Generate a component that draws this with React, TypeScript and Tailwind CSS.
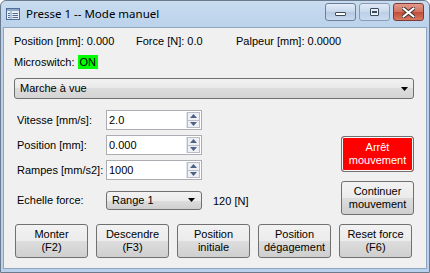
import React from "react";

const btnBg =
  "bg-[linear-gradient(#f2f2f2_0%,#ebebeb_50%,#dddddd_50%,#cfcfcf_100%)] border border-[#707070] rounded-[3px]";

const WinIcon = () => (
  <svg width="14" height="12" viewBox="0 0 14 12">
    <rect x="0.5" y="0.5" width="13" height="11" fill="#e8eef6" stroke="#4f6b93" />
    <rect x="1" y="1" width="12" height="2" fill="#8fa8c8" />
    <line x1="5" y1="3" x2="5" y2="11" stroke="#7f96b6" />
    <line x1="2" y1="5.5" x2="4" y2="5.5" stroke="#4f6b93" />
    <line x1="2" y1="7.5" x2="4" y2="7.5" stroke="#4f6b93" />
    <line x1="2" y1="9.5" x2="4" y2="9.5" stroke="#4f6b93" />
    <line x1="6.5" y1="5.5" x2="12" y2="5.5" stroke="#4f6b93" />
    <line x1="6.5" y1="7.5" x2="12" y2="7.5" stroke="#4f6b93" />
    <line x1="6.5" y1="9.5" x2="12" y2="9.5" stroke="#4f6b93" />
  </svg>
);

const Spin = () => (
  <div className="flex flex-col w-[14px] h-full border-l border-[#e2e3ea]">
    <div className="flex-1 flex items-center justify-center bg-[#eef0f4] border border-[#b8bdc8]">
      <svg width="7" height="4" viewBox="0 0 7 4">
        <path d="M3.5 0 L7 4 L0 4 Z" fill="#4d6185" />
      </svg>
    </div>
    <div className="flex-1 flex items-center justify-center bg-[#eef0f4] border border-t-0 border-[#b8bdc8]">
      <svg width="7" height="4" viewBox="0 0 7 4">
        <path d="M0 0 L7 0 L3.5 4 Z" fill="#4d6185" />
      </svg>
    </div>
  </div>
);

const Field = ({ label, value }: { label: string; value: string }) => (
  <div className="flex items-center h-[20px]">
    <span className="w-[92px] pl-[3px]">{label}</span>
    <div className="w-[96px] h-[20px] flex border border-[#abadb3] bg-white p-[1px]">
      <span className="flex-1 pl-[1px] leading-[16px]">{value}</span>
      <Spin />
    </div>
  </div>
);

const Btn = ({ a, b }: { a: string; b: string }) => (
  <div className={`w-[73px] h-[34px] flex flex-col items-center justify-center leading-[13px] ${btnBg}`}>
    <span>{a}</span>
    <span>{b}</span>
  </div>
);

const Arrow = () => (
  <svg width="7" height="4" viewBox="0 0 7 4">
    <path d="M0 0 L7 0 L3.5 4 Z" fill="#000" />
  </svg>
);

export default function App() {
  return (
    <div className="w-[430px] h-[273px] flex flex-col bg-[linear-gradient(#c8dbef,#b9d1ea_30px,#b9d1ea)] border border-[#6b7a8c] rounded-t-[6px] font-['Liberation_Sans',Arial,sans-serif] text-[11px] text-black overflow-hidden">
      {/* title bar */}
      <div className="h-[26px] flex items-start shrink-0">
        <div className="mt-[7px] ml-[5px]">
          <WinIcon />
        </div>
        <span className="ml-[6px] mt-[5px] font-['Noto_Sans',sans-serif] text-[11.5px] leading-[16px]">
          Presse 1 -- Mode manuel
        </span>
        <div className="ml-auto mr-[5px] flex gap-[3px] mt-[2px]">
          <div className="w-[31px] h-[18px] rounded-[3px] border border-[#6d809b] bg-[linear-gradient(#e4edf7,#c6d6ea_50%,#b4c8e0_50%,#c9daee)] flex items-center justify-center">
            <div className="w-[11px] h-[4px] mt-[4px] bg-white border border-[#3c4a5e] rounded-[1px]" />
          </div>
          <div className="w-[31px] h-[18px] rounded-[3px] border border-[#8a9cb5] bg-[linear-gradient(#e0eaf5,#c8d8eb_50%,#bccfe6_50%,#cadbee)] flex items-center justify-center">
            <div className="w-[9px] h-[8px] border border-[#3c4a5e] bg-[#e8eef6] rounded-[1px] flex items-center justify-center">
              <div className="w-[5px] h-[2px] border border-[#3c4a5e]" />
            </div>
          </div>
          <div className="w-[31px] h-[18px] rounded-[3px] border border-[#7a3a36] bg-[linear-gradient(#e49a8c,#d0705f_50%,#c04a37_50%,#d77a60)] flex items-center justify-center">
            <svg width="13" height="11" viewBox="0 0 13 11">
              <path
                d="M1.5 1.5 L11.5 9.5 M11.5 1.5 L1.5 9.5"
                stroke="#40302e"
                strokeWidth="4"
                strokeLinecap="round"
              />
              <path
                d="M1.5 1.5 L11.5 9.5 M11.5 1.5 L1.5 9.5"
                stroke="#fff"
                strokeWidth="2.2"
                strokeLinecap="round"
              />
            </svg>
          </div>
        </div>
      </div>

      {/* client area */}
      <div className="flex-1 mx-[2px] mb-[3px] bg-[#f0f0f0] border border-[#8ea5bf] flex flex-col pl-[10px] pr-[12px]">
        <div className="flex mt-[6px] h-[14px] items-center">
          <span className="w-[122px]">Position [mm]: 0.000</span>
          <span className="w-[100px]">Force [N]: 0.0</span>
          <span>Palpeur [mm]: 0.0000</span>
        </div>
        <div className="flex mt-[7px] h-[14px] items-center">
          <span>Microswitch:</span>
          <span className="ml-[3px] bg-[#00ff00] px-[2px] leading-[14px]">ON</span>
        </div>

        <div className="mt-[9px] h-[21px] flex items-center pl-[5px] pr-[5px] border border-[#707070] rounded-[3px] bg-[linear-gradient(#f2f2f2,#e8e8e8_50%,#dcdcdc_50%,#d4d4d4)]">
          <span>Marche à vue</span>
          <span className="ml-auto">
            <Arrow />
          </span>
        </div>

        <div className="flex mt-[11px]">
          <div className="flex flex-col gap-[5px]">
            <Field label="Vitesse [mm/s]:" value="2.0" />
            <Field label="Position [mm]:" value="0.000" />
            <Field label="Rampes [mm/s2]:" value="1000" />
            <div className="flex items-center h-[20px] mt-[5px]">
              <span className="w-[92px] pl-[3px]">Echelle force:</span>
              <div className={`w-[96px] h-[19px] flex items-center pl-[5px] pr-[6px] ${btnBg}`}>
                <span>Range 1</span>
                <span className="ml-auto">
                  <Arrow />
                </span>
              </div>
              <span className="ml-[11px] mt-[2px]">120 [N]</span>
            </div>
          </div>
          <div className="ml-auto flex flex-col">
            <div className="mt-[26px] w-[73px] h-[36px] flex flex-col items-center justify-center leading-[13px] bg-[#ff0000] text-white border border-[#707070] rounded-[3px] shadow-[inset_0_0_0_1px_#f8f8f8]">
              <span>Arrêt</span>
              <span>mouvement</span>
            </div>
            <div className="mt-[9px]">
              <Btn a="Continuer" b="mouvement" />
            </div>
          </div>
        </div>

        <div className="flex gap-[8px] mt-[9px] pl-[1px]">
          <Btn a="Monter" b="(F2)" />
          <Btn a="Descendre" b="(F3)" />
          <Btn a="Position" b="initiale" />
          <Btn a="Position" b="dégagement" />
          <Btn a="Reset force" b="(F6)" />
        </div>
      </div>
    </div>
  );
}
